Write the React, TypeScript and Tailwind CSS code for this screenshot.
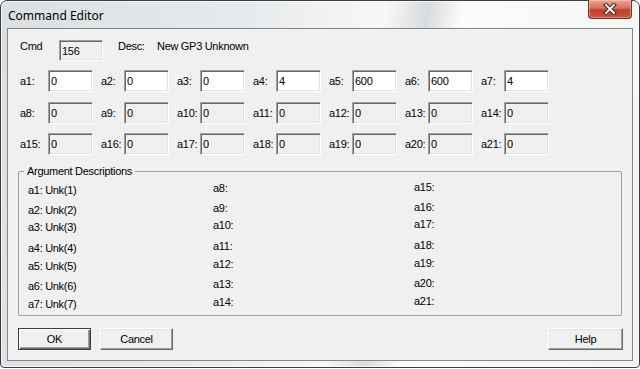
import React from "react";

type FieldRow = { label: string; value: string }[];

const rows: { enabled: boolean; cells: FieldRow }[] = [
  {
    enabled: true,
    cells: [
      { label: "a1:", value: "0" },
      { label: "a2:", value: "0" },
      { label: "a3:", value: "0" },
      { label: "a4:", value: "4" },
      { label: "a5:", value: "600" },
      { label: "a6:", value: "600" },
      { label: "a7:", value: "4" },
    ],
  },
  {
    enabled: false,
    cells: ["a8:", "a9:", "a10:", "a11:", "a12:", "a13:", "a14:"].map((l) => ({ label: l, value: "0" })),
  },
  {
    enabled: false,
    cells: ["a15:", "a16:", "a17:", "a18:", "a19:", "a20:", "a21:"].map((l) => ({ label: l, value: "0" })),
  },
];

const rowMargins = ["mt-[9px]", "mt-[10px]", "mt-[9px]"];

const descColumns = [
  { cls: "w-[185px] pt-[5px]", items: ["a1: Unk(1)", "a2: Unk(2)", "a3: Unk(3)", "a4: Unk(4)", "a5: Unk(5)", "a6: Unk(6)", "a7: Unk(7)"] },
  { cls: "w-[201px] pt-[3px]", items: ["a8:", "a9:", "a10:", "a11:", "a12:", "a13:", "a14:"] },
  { cls: "flex-1 pt-[2px]", items: ["a15:", "a16:", "a17:", "a18:", "a19:", "a20:", "a21:"] },
];

const descHeights = ["h-[20px]", "h-[17px]", "h-[21px]", "h-[18px]", "h-[20px]", "h-[18px]", "h-[14px]"];

const sunken =
  "border border-t-[#a0a0a0] border-l-[#a0a0a0] border-r-white border-b-white shadow-[inset_1px_1px_0_#696969,inset_-1px_-1px_0_#e3e3e3]";

const raised =
  "border border-t-white border-l-white border-r-[#696969] border-b-[#696969] shadow-[inset_-1px_-1px_0_#a0a0a0,inset_1px_1px_0_#e3e3e3]";

function Field({ value, enabled }: { value: string; enabled: boolean }) {
  return (
    <div
      className={`w-[45px] h-[22px] flex items-center pl-[2px] pb-[1px] ${sunken} ${
        enabled ? "bg-white" : "bg-[#f0f0f0]"
      }`}
    >
      {value}
    </div>
  );
}

function CloseButton() {
  return (
    <div className="ml-auto mr-[7px] -mt-px w-[44px] h-[19px] rounded-b-[4px] border border-t-0 border-[#7a2a1e] bg-[linear-gradient(180deg,#e9a796_0%,#d7705d_45%,#c0402b_55%,#c9553f_100%)] shadow-[inset_0_0_0_1px_rgba(255,220,210,0.45)] flex items-center justify-center">
      <svg width="14" height="12" viewBox="0 0 14 12">
        <path d="M3 2 L11 10 M11 2 L3 10" stroke="#4a1d15" strokeWidth="4" strokeLinecap="square" />
        <path d="M3 2 L11 10 M11 2 L3 10" stroke="#ffffff" strokeWidth="2" strokeLinecap="square" />
      </svg>
    </div>
  );
}

export default function App() {
  return (
    <div className="w-[640px] h-[369px] bg-white font-['Liberation_Sans',Arial,sans-serif] text-[11px] leading-[14px] tracking-[-0.3px] text-black">
      <div className="w-[640px] h-[368px] flex flex-col rounded-t-[7px] rounded-b-[4px] border border-[#3a3d40] bg-[linear-gradient(100deg,#dcdfe2_0%,#e7eaec_35%,#f6f7f8_55%,#d8dbde_61%,#fbfbfb_66%,#f3f4f5_100%)] shadow-[inset_0_0_0_1px_rgba(255,255,255,0.7)]">
        {/* Title bar */}
        <div className="h-[27px] flex items-start shrink-0">
          <div className="pl-[7px] mt-[7px] font-['Noto_Sans',sans-serif] text-[12px] leading-[16px] tracking-normal text-black">
            Command Editor
          </div>
          <CloseButton />
        </div>

        {/* Client area */}
        <div className="flex-1 mx-[6px] mb-[6px] border border-[#83878b] bg-[#f0f0f0] flex flex-col">
          {/* Cmd / Desc */}
          <div className="flex items-start pl-[12px] mt-[10px]">
            <div className="w-[39px]">Cmd</div>
            <div className={`w-[44px] h-[21px] mt-[1px] flex items-center pl-[2px] bg-[#f0f0f0] ${sunken}`}>156</div>
            <div className="ml-[15px] w-[39px]">Desc:</div>
            <div>New GP3 Unknown</div>
          </div>

          {/* Argument fields */}
          {rows.map((row, ri) => (
            <div key={ri} className={`flex items-center pl-[12px] ${rowMargins[ri]}`}>
              {row.cells.map((c, ci) => (
                <div key={c.label} className={`flex items-center ${ci === 0 ? "" : "ml-[8px]"}`}>
                  <div className={ci === 0 ? "w-[28px]" : "w-[23px]"}>{c.label}</div>
                  <Field value={c.value} enabled={row.enabled} />
                </div>
              ))}
            </div>
          ))}

          {/* Argument descriptions */}
          <fieldset className="ml-[10px] mt-[9px] w-[604px] h-[152px] border border-[#a0a0a0] rounded-[2px] pl-[9px]">
            <legend className="ml-[-4px] px-[3px]">Argument Descriptions</legend>
            <div className="flex">
              {descColumns.map((col, i) => (
                <div key={i} className={`flex flex-col ${col.cls}`}>
                  {col.items.map((t, j) => (
                    <div key={t} className={descHeights[j]}>
                      {t}
                    </div>
                  ))}
                </div>
              ))}
            </div>
          </fieldset>

          {/* Buttons */}
          <div className="flex mt-[12px] pl-[10px] pr-[9px]">
            <button className="w-[73px] h-[22px] bg-[#f0f0f0] border border-[#3c3c3c] shadow-[inset_1px_1px_0_#fff,inset_-1px_-1px_0_#696969,inset_-2px_-2px_0_#a0a0a0]">
              OK
            </button>
            <button className={`ml-[9px] w-[73px] h-[22px] bg-[#f0f0f0] ${raised}`}>Cancel</button>
            <button className={`ml-auto w-[75px] h-[22px] bg-[#f0f0f0] ${raised}`}>Help</button>
          </div>
        </div>
      </div>
    </div>
  );
}
